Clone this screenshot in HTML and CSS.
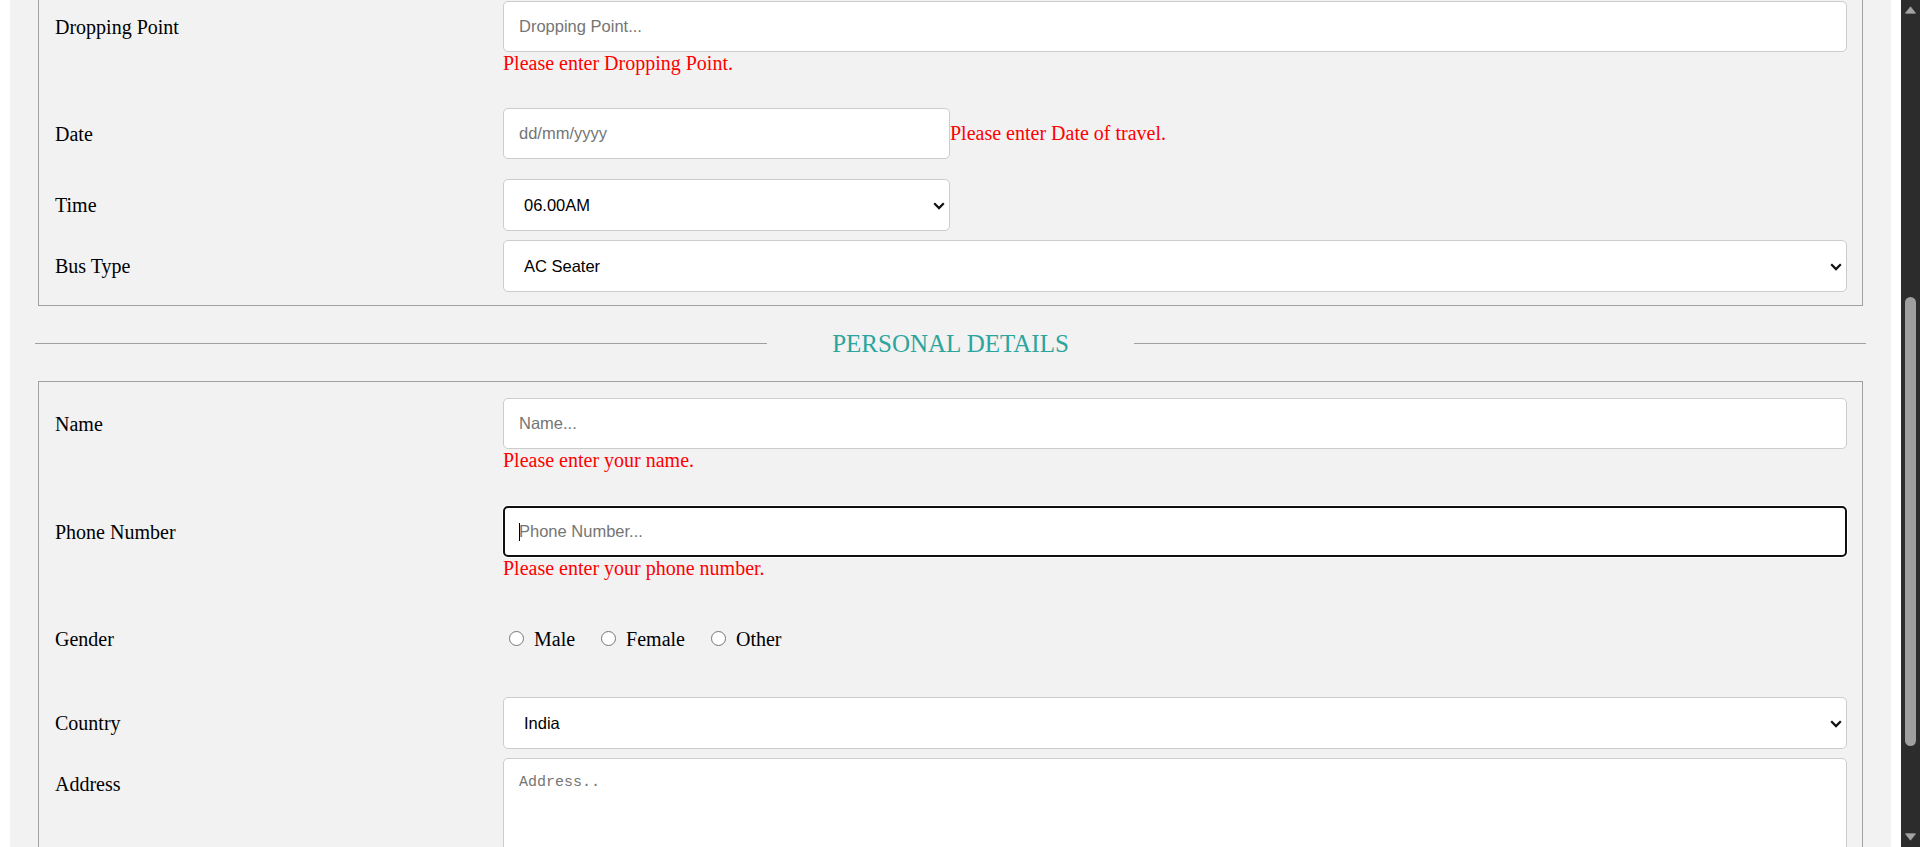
FILE: index.html
```html
<!DOCTYPE html>
<html lang="en">
<head>
<meta charset="utf-8">
<title>Bus Ticket Booking</title>
<link rel="stylesheet" href="styles.css">
</head>
<body>
<div class="viewport">
  <div class="page">
    <div class="container">
      <section class="box box-cut">
        <div class="row">
          <label class="lbl" for="drop">Dropping Point</label>
          <div class="field">
            <input class="ctl" id="drop" type="text" placeholder="Dropping Point...">
            <div class="error">Please enter Dropping Point.</div>
          </div>
        </div>
        <div class="row row-date">
          <label class="lbl" for="date">Date</label>
          <div class="field field-inline">
            <input class="ctl w-short" id="date" type="text" placeholder="dd/mm/yyyy">
            <span class="error-inline">Please enter Date of travel.</span>
          </div>
        </div>
        <div class="row">
          <label class="lbl" for="time">Time</label>
          <div class="field">
            <div class="select-wrap w-short">
              <select class="ctl ctl-select" id="time"><option>06.00AM</option><option>09.00AM</option></select>
              <svg class="chev" width="12" height="8" viewBox="0 0 12 8"><path d="M1.2 1.3 L6 6.1 L10.8 1.3" fill="none" stroke="#111" stroke-width="2.2"/></svg>
            </div>
          </div>
        </div>
        <div class="row">
          <label class="lbl" for="bus">Bus Type</label>
          <div class="field">
            <div class="select-wrap">
              <select class="ctl ctl-select" id="bus"><option>AC Seater</option><option>AC Sleeper</option></select>
              <svg class="chev" width="12" height="8" viewBox="0 0 12 8"><path d="M1.2 1.3 L6 6.1 L10.8 1.3" fill="none" stroke="#111" stroke-width="2.2"/></svg>
            </div>
          </div>
        </div>
      </section>

      <div class="section-head">
        <div class="rule"></div>
        <div class="section-title">PERSONAL DETAILS</div>
        <div class="rule"></div>
      </div>

      <section class="box box-open">
        <div class="row">
          <label class="lbl" for="name">Name</label>
          <div class="field">
            <input class="ctl" id="name" type="text" placeholder="Name...">
            <div class="error">Please enter your name.</div>
          </div>
        </div>
        <div class="row">
          <label class="lbl" for="phone">Phone Number</label>
          <div class="field">
            <div class="focus-wrap">
              <input class="ctl ctl-focus" id="phone" type="text" placeholder="Phone Number...">
              <span class="caret"></span>
            </div>
            <div class="error">Please enter your phone number.</div>
          </div>
        </div>
        <div class="row row-gender">
          <div class="lbl lbl-gender">Gender</div>
          <div class="field radios">
            <label class="opt"><input type="radio" name="gender" value="male"> Male</label><label class="opt"><input type="radio" name="gender" value="female"> Female</label><label class="opt"><input type="radio" name="gender" value="other"> Other</label>
          </div>
        </div>
        <div class="row">
          <label class="lbl" for="country">Country</label>
          <div class="field">
            <div class="select-wrap">
              <select class="ctl ctl-select" id="country"><option>India</option><option>Nepal</option></select>
              <svg class="chev" width="12" height="8" viewBox="0 0 12 8"><path d="M1.2 1.3 L6 6.1 L10.8 1.3" fill="none" stroke="#111" stroke-width="2.2"/></svg>
            </div>
          </div>
        </div>
        <div class="row">
          <label class="lbl" for="address">Address</label>
          <div class="field">
            <textarea class="ctl ctl-area" id="address" placeholder="Address.."></textarea>
          </div>
        </div>
      </section>
    </div>
  </div>
  <div class="scrollbar">
    <div class="sb-btn"><svg width="11" height="8" viewBox="0 0 11 8"><path d="M5.5 0.8 L10.5 7.2 L0.5 7.2 Z" fill="#a3a3a3" stroke="#a3a3a3" stroke-width="0.8" stroke-linejoin="round"/></svg></div>
    <div class="sb-track"><div class="sb-thumb"></div></div>
    <div class="sb-btn"><svg width="11" height="8" viewBox="0 0 11 8"><path d="M0.5 0.8 L10.5 0.8 L5.5 7.2 Z" fill="#a3a3a3" stroke="#a3a3a3" stroke-width="0.8" stroke-linejoin="round"/></svg></div>
  </div>
</div>
</body>
</html>
```

FILE: styles.css
```css
* {
  box-sizing: border-box;
}

html,
body {
  margin: 0;
  padding: 0;
}

body {
  background: #ffffff;
  font-family: "Liberation Serif", "Times New Roman", serif;
  color: #000;
}

.viewport {
  display: flex;
  height: 847px;
  overflow: hidden;
}

.page {
  flex: 1;
  min-width: 0;
  padding: 0 10px;
  overflow: hidden;
}

.container {
  background: #f2f2f2;
  padding: 0 25px;
}

.box {
  display: flex;
  flex-direction: column;
  gap: 9px;
  margin: 0 3px;
  border: 1px solid #a0a0a0;
  padding: 16px 15px 13px 16px;
}

.box-cut {
  border-top: none;
  padding-top: 1px;
}

.box-cut .error {
  margin-bottom: 24px;
}

.box-open {
  border-bottom: none;
  padding-bottom: 0;
}

.row {
  display: flex;
  align-items: flex-start;
}

.row-date {
  margin-bottom: 11px;
}

.row-gender {
  min-height: 74px;
}

.lbl {
  flex: none;
  width: 448px;
  padding-top: 15px;
  font-size: 20px;
  line-height: 23px;
}

.lbl-gender {
  padding-top: 14px;
}

.field {
  flex: 1;
  min-width: 0;
}

.field-inline {
  display: flex;
  align-items: center;
}

.ctl {
  display: block;
  width: 100%;
  height: 51px;
  margin: 0;
  padding: 0 15px;
  border: 1px solid #cccccc;
  border-radius: 5px;
  background: #ffffff;
  font-family: "Liberation Sans", Arial, sans-serif;
  font-size: 16.5px;
  color: #000;
  outline: none;
}

.ctl::placeholder {
  color: #757575;
  opacity: 1;
}

.w-short {
  flex: none;
  width: 447px;
}

.select-wrap {
  position: relative;
}

.ctl-select {
  -webkit-appearance: none;
  appearance: none;
  height: 52px;
  padding-left: 20px;
}

.chev {
  position: absolute;
  right: 5px;
  top: 23px;
  pointer-events: none;
}

.ctl-area {
  height: 250px;
  padding: 15px;
  font-family: "Liberation Mono", "DejaVu Sans Mono", monospace;
  font-size: 15px;
  resize: none;
}

.focus-wrap {
  position: relative;
}

.ctl-focus {
  border: 2px solid #101010;
  padding-left: 14px;
  box-shadow: 0 0 0 1px #ffffff;
}

.caret {
  position: absolute;
  left: 16px;
  top: 17px;
  width: 1px;
  height: 18px;
  background: #000;
}

.error {
  color: #ff0000;
  font-size: 20px;
  line-height: 23px;
  margin-bottom: 25px;
}

.error-inline {
  color: #ff0000;
  font-size: 20px;
  line-height: 23px;
  white-space: nowrap;
}

.section-head {
  display: flex;
  align-items: center;
  height: 75px;
}

.rule {
  flex: 1;
  height: 1px;
  background: #a0a0a0;
}

.section-title {
  width: 367px;
  text-align: center;
  font-size: 25px;
  line-height: 29px;
  color: #2ca59d;
}

.radios {
  display: flex;
  padding-top: 14px;
  font-size: 20px;
  line-height: 23px;
}

.opt {
  margin-right: 20px;
  white-space: nowrap;
}

.opt input {
  -webkit-appearance: none;
  appearance: none;
  display: inline-block;
  width: 15px;
  height: 15px;
  margin: 0 5px 0 6px;
  border: 1px solid #767676;
  border-radius: 50%;
  background: #ffffff;
  vertical-align: baseline;
}

.scrollbar {
  flex: none;
  width: 19px;
  background: #2c2c2c;
  display: flex;
  flex-direction: column;
}

.sb-btn {
  flex: none;
  height: 20px;
  display: flex;
  align-items: center;
  justify-content: center;
}

.sb-track {
  flex: 1;
  padding: 0 4px;
}

.sb-thumb {
  margin-top: 277px;
  height: 449px;
  border-radius: 6px;
  background: #9f9f9f;
}
```
